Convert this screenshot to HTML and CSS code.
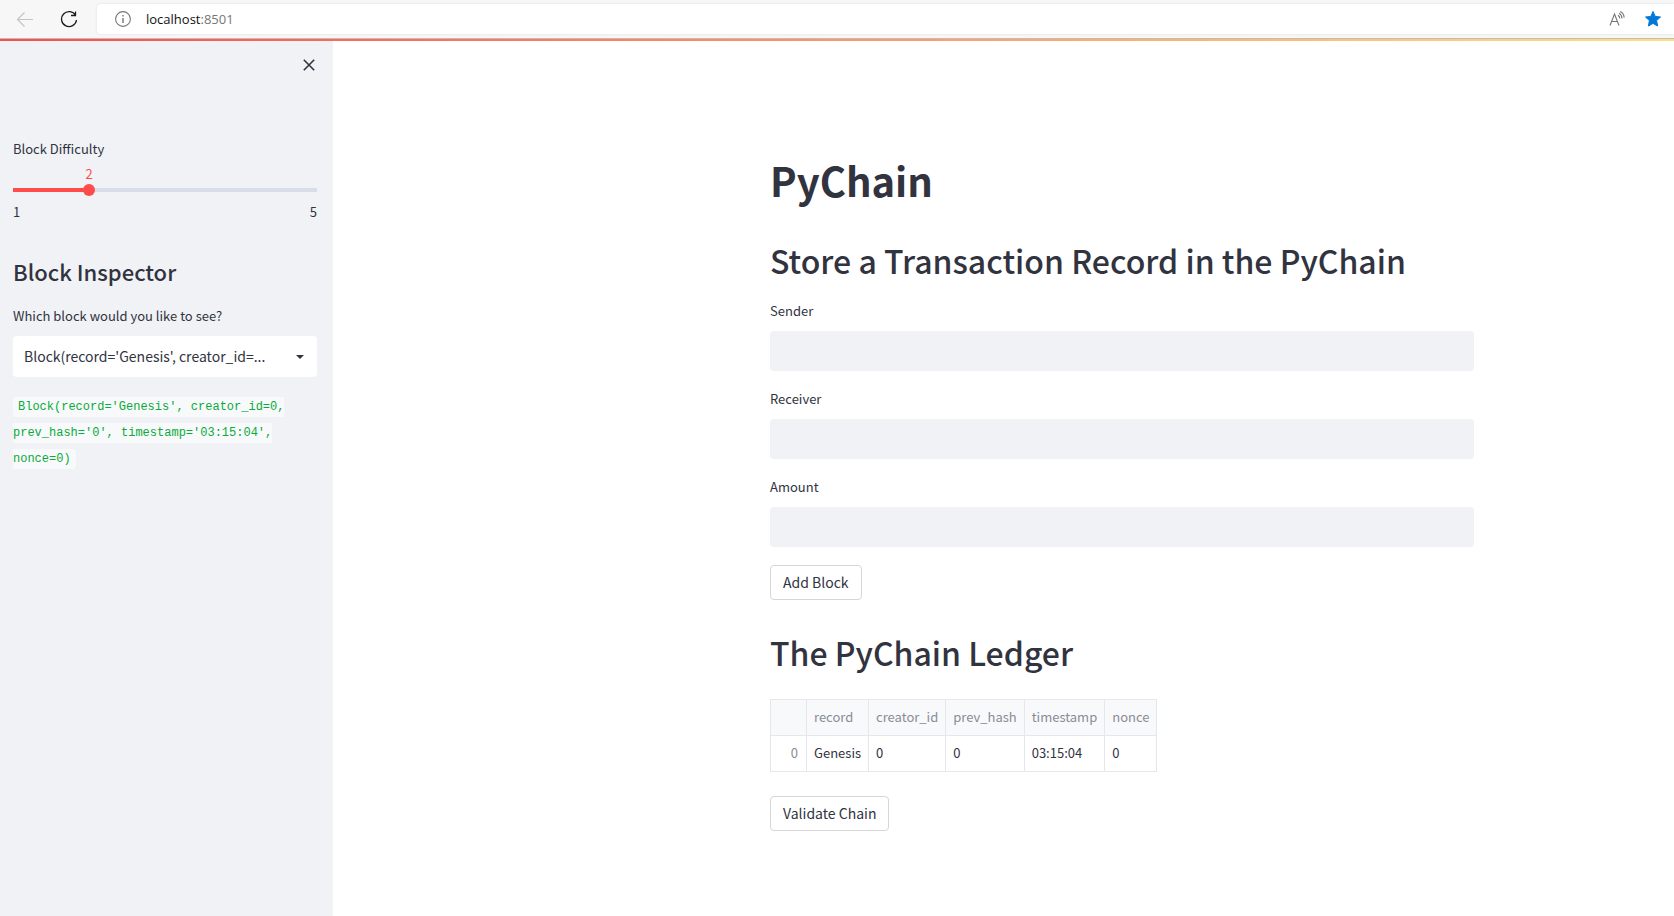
FILE: index.html
```html
<!DOCTYPE html>
<html lang="en">
<head>
<meta charset="utf-8">
<title>PyChain</title>
<link rel="stylesheet" href="styles.css">
</head>
<body>
<header class="browser">
  <button class="nav-btn nav-btn-off" type="button" aria-label="Back" disabled>
    <svg width="18" height="18" viewBox="0 0 18 18" fill="none" stroke="currentColor" stroke-width="1.2"><path d="M17 9.500H1.500M8.500 2.500L1.500 9.500l7 7"/></svg>
  </button>
  <button class="nav-btn" type="button" aria-label="Refresh">
    <svg width="18" height="18" viewBox="0 0 18 18" fill="none" stroke="currentColor" stroke-width="1.3"><path d="M15.600 5.400A7.500 7.500 0 1 0 16.500 10M15.500 1.500v4h-4.500"/></svg>
  </button>
  <div class="address">
    <svg class="info" width="16" height="16" viewBox="0 0 16 16" fill="none" stroke="currentColor" stroke-width="1.1"><circle cx="8" cy="8" r="7.4"/><path d="M8 7v5M8 4v1.4" stroke-width="1.4"/></svg>
    <span class="url">localhost<span class="port">:8501</span></span>
    <button class="addr-btn" type="button" aria-label="Read aloud">
      <svg width="17" height="16" viewBox="0 0 17 16" fill="none" stroke="currentColor" stroke-width="1.1"><path d="M1 14.500L5.500 3l4.500 11.500M2.600 10.500h5.800M9 4.200q1.700 1 1.800 3.300M10 2.200q2.800 1.400 3 5.200M11.200.6q3.600 1.600 4 6"/></svg>
    </button>
    <button class="addr-btn addr-star" type="button" aria-label="Favourite">
      <svg width="18" height="18" viewBox="0 0 18 18" fill="currentColor" stroke="currentColor" stroke-linejoin="round"><path d="M9 1.5l2.2 4.9 5.3.6-3.9 3.6 1 5.4L9 13.400l-4.6 2.600 1-5.400L1.500 7l5.300-.6z"/></svg>
    </button>
  </div>
</header>
<div class="decoration"></div>
<div class="app">
  <aside class="sidebar">
    <button class="close" type="button" aria-label="Close sidebar">
      <svg width="12" height="12" viewBox="0 0 12 12" fill="none" stroke="currentColor" stroke-width="1.6"><path d="M.8.800l10.400 10.400M11.200.8L.8 11.200"/></svg>
    </button>
    <div class="slider">
      <label class="label" for="difficulty">Block Difficulty</label>
      <output class="slider-value" for="difficulty" style="width: 50%">2</output>
      <input class="range" id="difficulty" type="range" min="1" max="5" value="2">
      <div class="ticks"><span>1</span><span>5</span></div>
    </div>
    <h2 class="side-title">Block Inspector</h2>
    <label class="label" for="block">Which block would you like to see?</label>
    <div class="select-wrap">
      <select class="select" id="block"><option>Block(record='Genesis', creator_id=...</option></select>
      <svg class="caret" width="8" height="4" viewBox="0 0 8 4"><path d="M0 0h8L4 4z" fill="currentColor"/></svg>
    </div>
    <p class="result"><code class="code">Block(record='Genesis', creator_id=0, prev_hash='0', timestamp='03:15:04', nonce=0)</code></p>
  </aside>
  <main class="main">
    <div class="content">
      <h1 class="title">PyChain</h1>
      <h2 class="heading">Store a Transaction Record in the PyChain</h2>
      <form class="form">
        <div class="field"><label class="label" for="sender">Sender</label><input class="input" id="sender" type="text"></div>
        <div class="field"><label class="label" for="receiver">Receiver</label><input class="input" id="receiver" type="text"></div>
        <div class="field"><label class="label" for="amount">Amount</label><input class="input" id="amount" type="text"></div>
        <button class="button" type="button">Add Block</button>
      </form>
      <h2 class="heading">The PyChain Ledger</h2>
      <table class="ledger">
        <thead><tr><th></th><th>record</th><th>creator_id</th><th>prev_hash</th><th>timestamp</th><th>nonce</th></tr></thead>
        <tbody><tr><th>0</th><td>Genesis</td><td>0</td><td>0</td><td>03:15:04</td><td>0</td></tr></tbody>
      </table>
      <button class="button" type="button">Validate Chain</button>
    </div>
  </main>
</div>
</body>
</html>
```
FILE: styles.css
```css
* { box-sizing: border-box; }

body {
  margin: 0;
  min-height: 100vh;
  display: flex;
  flex-direction: column;
  background: #fff;
  color: #31333f;
  font-family: "Noto Sans CJK SC", "Noto Sans", sans-serif;
  font-size: 13px;
  line-height: 20px;
}

h1, h2, p { margin: 0; }

button, input, select { font: inherit; color: inherit; }

svg { display: block; }

.browser {
  display: flex;
  align-items: center;
  height: 39px;
  padding: 4px 0 4px 16px;
  background: #f7f7f7;
  border-bottom: 1px solid #bdbdbd;
}

.nav-btn, .addr-btn, .close {
  padding: 0;
  border: 0;
  background: none;
}

.nav-btn { margin-right: 26px; color: #1b1b1b; }
.nav-btn-off { color: #c4c4c4; }

.address {
  flex: 1;
  display: flex;
  align-items: center;
  height: 30px;
  margin-left: -7px;
  padding: 0 12px 0 18px;
  background: #fff;
  border-radius: 4px 0 0 4px;
  box-shadow: 0 0 3px rgba(0, 0, 0, .1);
}

.info { color: #767676; }

.url {
  flex: 1;
  margin-left: 15px;
  font-family: "Open Sans", "Noto Sans", sans-serif;
  font-size: 13px;
  color: #111;
}

.port { color: #767676; }

.addr-btn { color: #767676; }
.addr-star { margin-left: 18px; color: #0078d7; }

.decoration {
  height: 2px;
  background: linear-gradient(90deg, #ff4b4b, #ffdf80);
}

.app { flex: 1; display: flex; }

.sidebar {
  flex: 0 0 333px;
  padding: 18px 16px 32px 13px;
  background: #f0f2f6;
}

.close { display: block; margin: 0 2px 0 auto; }

.label { display: block; font-size: 13px; line-height: 20px; }

.slider { margin-top: 68px; }

.slider-value {
  display: block;
  margin-top: 5px;
  text-align: center;
  color: #ff4b4b;
}

.range {
  display: block;
  appearance: none;
  width: calc(100% + 12px);
  height: 12px;
  margin: 0 -6px;
  background: none;
}

.range::-webkit-slider-runnable-track {
  height: 12px;
  background: linear-gradient(90deg, #ff4b4b 25%, #d9dde9 25%) no-repeat center / calc(100% - 12px) 4px;
}

.range::-webkit-slider-thumb {
  appearance: none;
  width: 12px;
  height: 12px;
  border-radius: 50%;
  background: #ff4b4b;
}

.ticks { display: flex; justify-content: space-between; margin-top: 6px; }

.side-title {
  margin: 34px 0 20px;
  font-size: 22px;
  line-height: 30px;
  font-weight: 500;
}

.select-wrap { display: grid; align-items: center; margin-top: 10px; }

.select {
  grid-area: 1 / 1;
  appearance: none;
  width: 100%;
  height: 41px;
  padding: 0 40px 2px 11px;
  border: 0;
  border-radius: 4px;
  background: #fff;
  font-size: 14px;
}

.caret { grid-area: 1 / 1; justify-self: end; margin-right: 13px; }

.result { margin-top: 14px; font-size: 16px; line-height: 1.6; }

.code {
  padding: 3px 5px;
  border-radius: 4px;
  background: #f8f9fb;
  color: #09ab3b;
  font-family: "Liberation Mono", monospace;
  font-size: 12px;
}

.main {
  flex: 1;
  display: grid;
  grid-template-columns: 437fr minmax(0, 704px) 200fr;
  align-items: start;
}

.content { grid-column: 2; padding: 111px 0 80px; }

.title { font-size: 40px; line-height: 56px; font-weight: 700; }

.heading { margin-top: 30px; font-size: 32px; line-height: 44px; font-weight: 500; }

.form { margin-top: 19px; }

.field { margin-bottom: 18px; }

.input {
  display: block;
  width: 100%;
  height: 40px;
  margin-top: 10px;
  padding: 0 12px;
  border: 0;
  border-radius: 4px;
  background: #f0f2f6;
}

.button {
  display: block;
  height: 35px;
  padding: 0 12px 1px;
  border: 1px solid #d6d6d9;
  border-radius: 4px;
  background: #fff;
  font-size: 14px;
}

.ledger {
  margin: 25px 0 24px;
  border-collapse: collapse;
  font-size: 13px;
}

.ledger th, .ledger td {
  height: 36px;
  padding: 0 7px 1px;
  border: 1px solid #e6e7ea;
  font-weight: 400;
  text-align: left;
}

.ledger th { color: #8a8c95; }
.ledger thead th { background: #f8f9fb; }
.ledger tr th:first-child { width: 36px; padding-right: 8px; text-align: right; }
```
